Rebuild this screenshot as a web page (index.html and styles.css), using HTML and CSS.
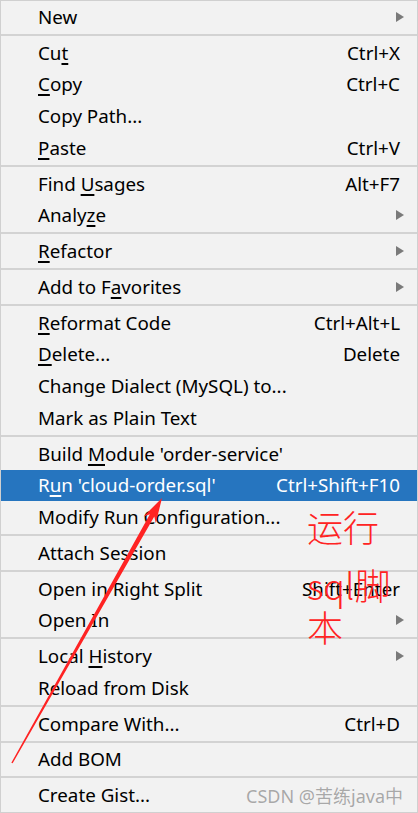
FILE: index.html
```html
<!DOCTYPE html>
<html>
<head>
<meta charset="utf-8">
<link rel="stylesheet" href="styles.css">
</head>
<body>
<div class="menu">
  <div class="row"><span class="label">New</span><span class="arrow"></span></div>
  <div class="sep"></div>
  <div class="row"><span class="label">Cu<u>t</u></span><span class="key">Ctrl+X</span></div>
  <div class="row"><span class="label"><u>C</u>opy</span><span class="key">Ctrl+C</span></div>
  <div class="row"><span class="label">Copy Path...</span></div>
  <div class="row"><span class="label"><u>P</u>aste</span><span class="key">Ctrl+V</span></div>
  <div class="sep"></div>
  <div class="row"><span class="label">Find <u>U</u>sages</span><span class="key">Alt+F7</span></div>
  <div class="row"><span class="label">Analy<u>z</u>e</span><span class="arrow"></span></div>
  <div class="sep"></div>
  <div class="row"><span class="label"><u>R</u>efactor</span><span class="arrow"></span></div>
  <div class="sep"></div>
  <div class="row"><span class="label">Add to F<u>a</u>vorites</span><span class="arrow"></span></div>
  <div class="sep"></div>
  <div class="row"><span class="label"><u>R</u>eformat Code</span><span class="key">Ctrl+Alt+L</span></div>
  <div class="row"><span class="label"><u>D</u>elete...</span><span class="key">Delete</span></div>
  <div class="row"><span class="label">Change Dialect (MySQL) to...</span></div>
  <div class="row"><span class="label">Mark as Plain Text</span></div>
  <div class="sep"></div>
  <div class="row"><span class="label">Build <u>M</u>odule 'order-service'</span></div>
  <div class="row selected"><span class="label">R<u>u</u>n 'cloud-order.sql'</span><span class="key">Ctrl+Shift+F10</span></div>
  <div class="row"><span class="label">Modify Run Configuration...</span></div>
  <div class="sep"></div>
  <div class="row"><span class="label">Attach Session</span></div>
  <div class="sep"></div>
  <div class="row"><span class="label">Open in Right Split</span><span class="key">Shift+Enter</span></div>
  <div class="row"><span class="label">Open In</span><span class="arrow"></span></div>
  <div class="sep"></div>
  <div class="row"><span class="label">Local <u>H</u>istory</span><span class="arrow"></span></div>
  <div class="row"><span class="label">Reload from Disk</span></div>
  <div class="sep"></div>
  <div class="row"><span class="label">Compare With...</span><span class="key">Ctrl+D</span></div>
  <div class="sep"></div>
  <div class="row"><span class="label">Add BOM</span></div>
  <div class="sep"></div>
  <div class="row"><span class="label">Create Gist...</span></div>

  <div class="note">
    <div class="note-l1">运行</div>
    <div class="note-l2">sql脚</div>
    <div class="note-l3">本</div>
  </div>
  <svg class="pointer" width="418" height="813" viewBox="0 0 418 813">
    <polygon fill="#ff2323" points="11.35,762.63 149.9,514.2 143.6,516.4 162,498 155.8,523.2 154.3,516.6 12.65,763.37"/>
  </svg>
  <div class="mark">CSDN @苦练java中</div>
</div>
</body>
</html>
```
FILE: styles.css
```css
html, body {
  margin: 0;
  padding: 0;
  background: #f2f2f2;
}
.menu {
  position: relative;
  width: 416px;
  height: 811px;
  border: 1px solid #d0d0d0;
  background: #f2f2f2;
  font-family: "Noto Sans", "Noto Sans CJK SC", sans-serif;
  font-size: 18.8px;
  color: #000;
  overflow: hidden;
}
.row {
  height: 31.75px;
  display: flex;
  align-items: center;
  padding: 0 17px 0 37px;
  white-space: nowrap;
}
.row u {
  text-decoration-thickness: 1.5px;
  text-underline-offset: 3px;
}
.label {
  flex: 1;
}
.key {
  text-align: right;
}
.arrow {
  width: 0;
  height: 0;
  border-left: 8px solid #7a7a7a;
  border-top: 5px solid transparent;
  border-bottom: 5px solid transparent;
  margin-right: -4px;
}
.selected {
  background: #2675bf;
  color: #fff;
}
.sep {
  height: 2px;
  margin: 1px 0;
  background: #d3d3d3;
}
.note {
  position: absolute;
  left: 306px;
  top: 507px;
  color: #ff2323;
  font-family: "Noto Sans CJK SC", sans-serif;
  font-size: 36px;
  font-weight: 300;
  line-height: 1;
}
.note-l1 { height: 58px; }
.note-l2 { height: 42px; }
.pointer {
  position: absolute;
  left: -1px;
  top: -1px;
}
.mark {
  position: absolute;
  right: 14px;
  bottom: 4px;
  font-family: "Noto Sans", "Noto Sans CJK SC", sans-serif;
  font-size: 18px;
  color: #a8a8a8;
  text-shadow: 0 0 1px #fff;
}
```
